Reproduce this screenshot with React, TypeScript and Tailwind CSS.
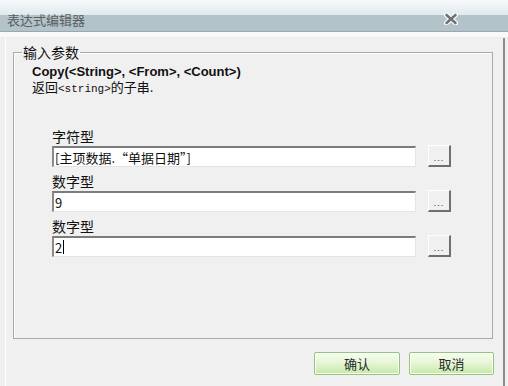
import React from "react";

const cjk = "font-['SimSun','Noto_Sans_CJK_SC',sans-serif]";

function Field({ label, value, caret }: { label: string; value: string; caret?: boolean }) {
  return (
    <div className="flex flex-col">
      <div className="h-[16px] text-[14px] leading-[16px] text-[#111]">{label}</div>
      <div className="mt-[2px] flex items-start">
        <div className="h-[21px] w-[364px] border-t-2 border-l-2 border-r border-b border-t-[#7c7c7c] border-l-[#8a8a8a] border-r-[#e4e4e4] border-b-[#e4e4e4] bg-white pl-[1px] text-[13px] leading-[17px] text-[#111] flex items-center">
          <span>{value}</span>
          {caret && <span className="ml-[1px] inline-block h-[14px] w-px bg-black" />}
        </div>
        <button className="ml-[12px] -mt-[1px] h-[22px] w-[23px] border-t border-l border-r-2 border-b-2 border-t-white border-l-white border-r-[#6f6f6f] border-b-[#6f6f6f] bg-[#f0f0f0] flex items-end justify-center pb-[2px]">
          <span className="text-[9px] leading-[9px] tracking-[1px] text-[#333] font-['Liberation_Sans',sans-serif]">...</span>
        </button>
      </div>
    </div>
  );
}

function GreenButton({ children, w }: { children: React.ReactNode; w: string }) {
  return (
    <button
      className={`${w} h-[23px] rounded-[2px] border border-[#93c57c] bg-linear-to-b from-[#f8fdf3] via-[#e4f5d4] to-[#c6e9a6] text-[13px] leading-[21px] text-[#2a2a2a] shadow-[inset_0_0_0_1px_#fbfff6]`}
    >
      {children}
    </button>
  );
}

export default function App() {
  return (
    <div className={`w-[508px] h-[386px] overflow-hidden bg-[#f0f0f0] flex flex-col ${cjk}`}>
      {/* title bar: pale top half, blue-grey lower band */}
      <div className="h-[32px] shrink-0 flex flex-col bg-slate-400">
        <div className="h-[15px] shrink-0 bg-linear-to-b from-[#f7fafb] to-[#e1e9ec]" />
        <div className="h-[17px] shrink-0 bg-[#b3c3c9] border-b border-b-[#98aab1]">
          <div className="-mt-[3px] flex items-start justify-between pl-[7px] pr-[50px]">
            <span className="text-[13px] leading-[15px] text-[#5a5f62]">表达式编辑器</span>
            <svg width="14" height="12" viewBox="0 0 14 12" className="mt-[1px]">
              <path d="M2.5 2 L11.5 10 M11.5 2 L2.5 10" stroke="#ffffff" strokeWidth="5" strokeLinecap="round" />
              <path d="M2.5 2 L11.5 10 M11.5 2 L2.5 10" stroke="#6b7376" strokeWidth="2.6" strokeLinecap="round" />
            </svg>
          </div>
        </div>
      </div>

      <div className="h-[6px] shrink-0 bg-[#f9f9f9] border-b border-b-[#ececec]" />

      {/* body */}
      <div className="flex-1 ml-[5px] mr-[3px] border-l border-l-white border-r-2 border-r-[#8c8c8c] flex flex-col">
        <fieldset className="ml-[7px] mt-[7px] w-[480px] h-[294px] border border-[#a9a9a9] shadow-[inset_1px_1px_0_#ffffff] px-[18px]">
          <legend className="ml-[-10px] px-[1px] text-[14px] leading-[15px] text-[#111]">输入参数</legend>
          <div className="mt-[4px] text-[13px] leading-[15px] font-bold text-[#111] font-['Liberation_Sans',sans-serif]">
            Copy(&lt;String&gt;, &lt;From&gt;, &lt;Count&gt;)
          </div>
          <div className="mt-[1px] text-[13px] leading-[14px] text-[#111]">
            返回<span className="font-['Liberation_Mono',monospace] text-[11px]">&lt;string&gt;</span>的子串.
          </div>
          <div className="mt-[32px] ml-[20px] flex flex-col gap-[6px]">
            <Field label="字符型" value="[主项数据.“单据日期”]" />
            <Field label="数字型" value="9" />
            <Field label="数字型" value="2" caret />
          </div>
        </fieldset>
        <div className="mt-[13px] mr-[9px] flex justify-end gap-[9px]">
          <GreenButton w="w-[86px]">确认</GreenButton>
          <GreenButton w="w-[85px]">取消</GreenButton>
        </div>
      </div>
    </div>
  );
}
